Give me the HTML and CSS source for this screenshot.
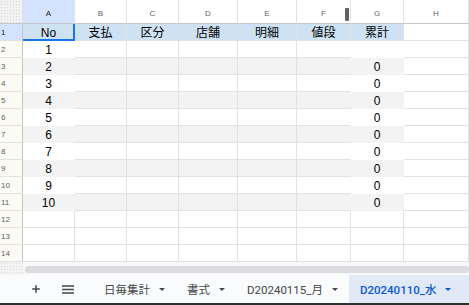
FILE: index.html
```html
<!DOCTYPE html>
<html lang="ja">
  <head>
    <meta charset="UTF-8" />
    <meta name="viewport" content="width=device-width, initial-scale=1.0" />
    <title>D20240110_水</title>
    <link rel="stylesheet" href="styles.css">
  </head>
  <body>
    <div class="sheet">
      <div class="row head">
        <div class="c corner"></div>
        <div class="c sel">A</div>
        <div class="c">B</div>
        <div class="c">C</div>
        <div class="c">D</div>
        <div class="c">E</div>
        <div class="c">F</div>
        <div class="c">G</div>
        <div class="c">H</div>
        <span class="freeze"></span>
      </div>

      <div class="row">
        <div class="c rh sel">1</div>
        <div class="c title cur">No</div>
        <div class="c title">支払</div>
        <div class="c title">区分</div>
        <div class="c title">店舗</div>
        <div class="c title">明細</div>
        <div class="c title">値段</div>
        <div class="c title">累計</div>
        <div class="c"></div>
      </div>

      <div class="row">
        <div class="c rh">2</div>
        <div class="c nb">1</div>
        <div class="c"></div><div class="c"></div><div class="c"></div><div class="c"></div>
        <div class="c nr"></div>
        <div class="c nb"></div>
        <div class="c"></div>
      </div>
      <div class="row band">
        <div class="c rh">3</div>
        <div class="c nb">2</div>
        <div class="c"></div><div class="c"></div><div class="c"></div><div class="c"></div>
        <div class="c nr"></div>
        <div class="c nb">0</div>
        <div class="c"></div>
      </div>
      <div class="row">
        <div class="c rh">4</div>
        <div class="c nb">3</div>
        <div class="c"></div><div class="c"></div><div class="c"></div><div class="c"></div>
        <div class="c nr"></div>
        <div class="c nb">0</div>
        <div class="c"></div>
      </div>
      <div class="row band">
        <div class="c rh">5</div>
        <div class="c nb">4</div>
        <div class="c"></div><div class="c"></div><div class="c"></div><div class="c"></div>
        <div class="c nr"></div>
        <div class="c nb">0</div>
        <div class="c"></div>
      </div>
      <div class="row">
        <div class="c rh">6</div>
        <div class="c nb">5</div>
        <div class="c"></div><div class="c"></div><div class="c"></div><div class="c"></div>
        <div class="c nr"></div>
        <div class="c nb">0</div>
        <div class="c"></div>
      </div>
      <div class="row band">
        <div class="c rh">7</div>
        <div class="c nb">6</div>
        <div class="c"></div><div class="c"></div><div class="c"></div><div class="c"></div>
        <div class="c nr"></div>
        <div class="c nb">0</div>
        <div class="c"></div>
      </div>
      <div class="row">
        <div class="c rh">8</div>
        <div class="c nb">7</div>
        <div class="c"></div><div class="c"></div><div class="c"></div><div class="c"></div>
        <div class="c nr"></div>
        <div class="c nb">0</div>
        <div class="c"></div>
      </div>
      <div class="row band">
        <div class="c rh">9</div>
        <div class="c nb">8</div>
        <div class="c"></div><div class="c"></div><div class="c"></div><div class="c"></div>
        <div class="c nr"></div>
        <div class="c nb">0</div>
        <div class="c"></div>
      </div>
      <div class="row">
        <div class="c rh">10</div>
        <div class="c nb">9</div>
        <div class="c"></div><div class="c"></div><div class="c"></div><div class="c"></div>
        <div class="c nr"></div>
        <div class="c nb">0</div>
        <div class="c"></div>
      </div>
      <div class="row band">
        <div class="c rh">11</div>
        <div class="c nb">10</div>
        <div class="c"></div><div class="c"></div><div class="c"></div><div class="c"></div>
        <div class="c nr"></div>
        <div class="c nb">0</div>
        <div class="c"></div>
      </div>

      <div class="row">
        <div class="c rh">12</div>
        <div class="c"></div><div class="c"></div><div class="c"></div><div class="c"></div>
        <div class="c"></div><div class="c"></div><div class="c"></div><div class="c"></div>
      </div>
      <div class="row">
        <div class="c rh">13</div>
        <div class="c"></div><div class="c"></div><div class="c"></div><div class="c"></div>
        <div class="c"></div><div class="c"></div><div class="c"></div><div class="c"></div>
      </div>
      <div class="row">
        <div class="c rh">14</div>
        <div class="c"></div><div class="c"></div><div class="c"></div><div class="c"></div>
        <div class="c"></div><div class="c"></div><div class="c"></div><div class="c"></div>
      </div>
    </div>

    <div class="hscroll">
      <div class="dots"></div>
      <div class="thumb"></div>
    </div>

    <div class="tabbar">
      <div class="tbtn">
        <svg width="10" height="10" viewBox="0 0 10 10"><path d="M5 1.2v7.6M1.2 5h7.6" stroke="#444746" stroke-width="1.5" /></svg>
      </div>
      <div class="tbtn">
        <svg width="12" height="9" viewBox="0 0 12 9"><path d="M0 1h12M0 4.5h12M0 8h12" stroke="#444746" stroke-width="1.3" /></svg>
      </div>
      <div class="tabs">
        <div class="tab">日毎集計<span class="caret"></span></div>
        <div class="tab">書式<span class="caret"></span></div>
        <div class="tab">D20240115_月<span class="caret"></span></div>
        <div class="tab active">D20240110_水<span class="caret"></span></div>
      </div>
    </div>
  </body>
</html>
```

FILE: styles.css
```css
* {
  box-sizing: border-box;
}

body {
  margin: 0;
  width: 469px;
  height: 305px;
  overflow: hidden;
  background: #fff;
  font-family: "Liberation Sans", "Noto Sans CJK JP", Arial, sans-serif;
}

.row {
  display: grid;
  grid-template-columns: 23px 52px 52px 52px 59px 59px 54px 53px 1fr;
  height: 17px;
}

.c {
  display: flex;
  align-items: flex-end;
  justify-content: center;
  border-right: 1px solid #e2e2e2;
  border-bottom: 1px solid #e2e2e2;
  background: #fff;
  color: #000;
  font-size: 12px;
  line-height: 13px;
  white-space: nowrap;
  overflow: hidden;
}

/* column letters */
.head {
  position: relative;
  height: 24px;
}

.head .c {
  align-items: center;
  padding-top: 3px;
  font-size: 8px;
  color: #5f6368;
  border-bottom-color: #c4c7c5;
}

.head .corner {
  background-color: #f1f1f1;
  background-image: radial-gradient(#d9d9d9 0.6px, transparent 0.7px);
  background-size: 3px 3px;
}

.freeze {
  position: absolute;
  left: 345px;
  top: 8px;
  width: 4px;
  height: 13px;
  border-radius: 1px;
  background: #5f6368;
}

/* row numbers */
.rh {
  align-items: center;
  justify-content: flex-start;
  padding-left: 1px;
  background: #fbfaf4;
  border-right-color: #c4c7c5;
  color: #5f6368;
  font-size: 8px;
}

.head .sel,
.rh.sel {
  background: #d3e3fd;
  color: #1f1f1f;
}

.title {
  background: #cfe2f3;
}

.cur {
  border-right-color: #1a73e8;
  border-bottom-color: #1a73e8;
  box-shadow: inset -1px -1px 0 #1a73e8;
}

.band .c:not(.rh):not(:last-child) {
  background: #f3f3f3;
}

.nb {
  border-right-color: transparent;
  border-bottom-color: transparent;
}

.nr {
  border-right-color: transparent;
}

/* horizontal scroll */
.hscroll {
  display: flex;
  height: 13px;
  background: #f8f8f8;
}

.dots {
  width: 23px;
  background-color: #f3f3f3;
  background-image: radial-gradient(#dcdcdc 0.6px, transparent 0.7px);
  background-size: 3px 3px;
}

.thumb {
  flex: 1;
  margin: 4px 0 2px 2px;
  border-radius: 4px;
  background: #dadce0;
}

/* sheet tabs */
.tabbar {
  display: flex;
  height: 30px;
  padding-left: 24px;
  background: #f9fbfd;
  border-bottom: 2px solid #2e2e2e;
  font-family: Roboto, "Noto Sans CJK JP", sans-serif;
  font-size: 11.5px;
  color: #444746;
}

.tbtn {
  width: 24px;
  display: flex;
  align-items: center;
  justify-content: center;
}

.tbtn + .tbtn {
  margin-left: 8px;
}

.tabs {
  flex: 1;
  display: flex;
  margin-left: 13px;
}

.tab {
  display: flex;
  align-items: center;
  gap: 9px;
  padding: 0 11px;
  white-space: nowrap;
}

.tab.active {
  flex: 1;
  background: #e1e9f7;
  color: #0b57d0;
  font-weight: 500;
}

.caret {
  width: 0;
  height: 0;
  border-left: 3px solid transparent;
  border-right: 3px solid transparent;
  border-top: 3px solid currentColor;
}
```
